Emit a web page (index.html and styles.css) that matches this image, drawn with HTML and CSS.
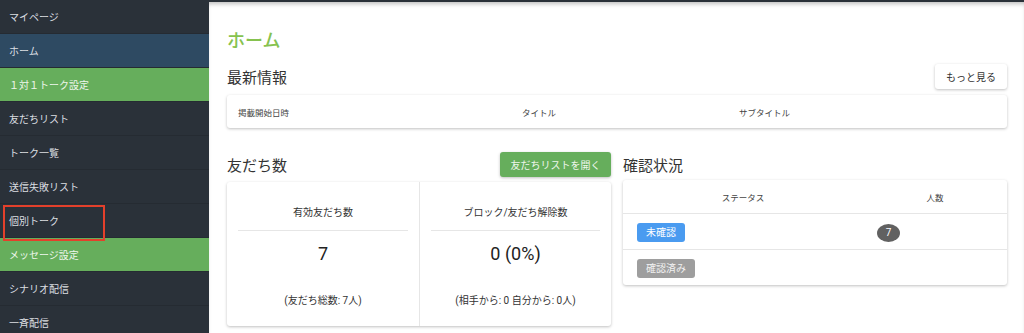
FILE: index.html
```html
<!DOCTYPE html>
<html lang="ja">
<head>
    <meta charset="UTF-8">
    <meta name="viewport" content="width=device-width, initial-scale=1.0">
    <title>ホーム</title>
    <link rel="stylesheet" href="styles.css">
</head>
<body>
    <div class="app-container">
        <aside class="sidebar">
            <ul class="side-menu">
                <li><a href="#">マイページ</a></li>
                <li class="current"><a href="#">ホーム</a></li>
                <li class="group"><a href="#">１対１トーク設定</a></li>
                <li><a href="#">友だちリスト</a></li>
                <li><a href="#">トーク一覧</a></li>
                <li><a href="#">送信失敗リスト</a></li>
                <li class="marked"><a href="#">個別トーク</a></li>
                <li class="group"><a href="#">メッセージ設定</a></li>
                <li><a href="#">シナリオ配信</a></li>
                <li><a href="#">一斉配信</a></li>
            </ul>
        </aside>

        <main>
            <h1 class="page-title">ホーム</h1>

            <section class="news">
                <div class="section-head">
                    <h2>最新情報</h2>
                    <button class="btn btn-white">もっと見る</button>
                </div>
                <div class="card news-table">
                    <span>掲載開始日時</span>
                    <span>タイトル</span>
                    <span>サブタイトル</span>
                </div>
            </section>

            <div class="bottom-grid">
                <section class="friends">
                    <div class="section-head">
                        <h2>友だち数</h2>
                        <button class="btn btn-green">友だちリストを開く</button>
                    </div>
                    <div class="card friends-card">
                        <div class="friend-col">
                            <h3>有効友だち数</h3>
                            <div class="friend-value">7</div>
                            <p>(友だち総数: 7人)</p>
                        </div>
                        <div class="friend-col">
                            <h3>ブロック/友だち解除数</h3>
                            <div class="friend-value">0 (0%)</div>
                            <p>(相手から: 0 自分から: 0人)</p>
                        </div>
                    </div>
                </section>

                <section class="status">
                    <div class="section-head">
                        <h2>確認状況</h2>
                    </div>
                    <div class="card status-card">
                        <div class="status-row status-header">
                            <span class="col-center">ステータス</span>
                            <span class="col-center">人数</span>
                        </div>
                        <div class="status-row">
                            <span><span class="tag tag-blue">未確認</span></span>
                            <span><span class="count-badge">7</span></span>
                        </div>
                        <div class="status-row">
                            <span><span class="tag tag-gray">確認済み</span></span>
                            <span></span>
                        </div>
                    </div>
                </section>
            </div>
        </main>
    </div>
</body>
</html>
```

FILE: styles.css
```css
/* Reset and base styles */
* {
    margin: 0;
    padding: 0;
    box-sizing: border-box;
}

body {
    font-family: Roboto, "Noto Sans CJK JP", sans-serif;
    background-color: #fff;
    color: #333;
    overflow: hidden;
}

/* Layout */
.app-container {
    display: flex;
    height: 333px;
}

/* Sidebar */
.sidebar {
    width: 209px;
    flex-shrink: 0;
    background-color: #2a3139;
}

.side-menu {
    list-style: none;
}

.side-menu li {
    height: 34px;
    border-bottom: 1px solid #252b32;
    position: relative;
}

.side-menu a {
    display: flex;
    align-items: center;
    height: 100%;
    padding-left: 9px;
    color: #dcdfe2;
    font-size: 10px;
    text-decoration: none;
}

.side-menu li.current {
    background-color: #2e4a62;
}

.side-menu li.group {
    background-color: #66ae5c;
}

.side-menu li.group a {
    color: #eef6ec;
}

/* red highlight frame drawn over the item */
.side-menu li.marked {
    z-index: 2;
}

.side-menu li.marked::after {
    content: "";
    position: absolute;
    left: 3px;
    top: 1px;
    width: 98px;
    height: 32px;
    border: 2px solid #e4402b;
}

/* Main area */
main {
    flex: 1;
    padding: 0 17px 0 18px;
    border-top: 2px solid #2a3139;
    box-shadow: inset 0 4px 4px -2px rgba(0, 0, 0, 0.25);
}

.page-title {
    margin-top: 27px;
    font-size: 18px;
    font-weight: 500;
    line-height: 24px;
    color: #86c24f;
}

.section-head {
    display: flex;
    align-items: center;
    justify-content: space-between;
    height: 25px;
}

.section-head h2 {
    font-size: 15px;
    font-weight: 400;
    color: #333;
}

.news .section-head {
    margin-top: 11px;
}

/* Buttons */
.btn {
    height: 25px;
    padding: 0 10px;
    border: none;
    border-radius: 3px;
    font-family: inherit;
    font-size: 10px;
    cursor: pointer;
}

.btn-white {
    background-color: #fff;
    color: #333;
    box-shadow: 0 1px 3px rgba(0, 0, 0, 0.25);
    width: 72px;
}

.btn-green {
    background-color: #66ae5c;
    color: #eef6ec;
    box-shadow: 0 1px 3px rgba(0, 0, 0, 0.25);
    width: 111px;
}

/* Cards */
.card {
    background-color: #fff;
    border-radius: 3px;
    box-shadow: 0 1px 3px rgba(0, 0, 0, 0.25);
}

.news-table {
    margin-top: 6px;
    height: 33px;
    display: grid;
    grid-template-columns: 284px 217px 1fr;
    align-items: center;
    padding-left: 11px;
    font-size: 8.5px;
    color: #444;
}

.bottom-grid {
    display: grid;
    grid-template-columns: 1fr 1fr;
    gap: 12px;
    margin-top: 24px;
}

/* Friends card */
.friends-card {
    margin-top: 5px;
    height: 144px;
    display: grid;
    grid-template-columns: 1fr 1fr;
}

.friend-col {
    padding: 24px 11px 0;
    text-align: center;
}

.friend-col + .friend-col {
    border-left: 1px solid #e6e6e6;
}

.friend-col h3 {
    font-size: 10px;
    font-weight: 400;
    line-height: 14px;
    color: #333;
    padding-bottom: 10px;
    border-bottom: 1px solid #e6e6e6;
}

.friend-value {
    margin-top: 11px;
    font-size: 18px;
    line-height: 24px;
    color: #222;
}

.friend-col p {
    margin-top: 28px;
    font-size: 10px;
    line-height: 14px;
    color: #333;
}

/* Status card */
.status-card {
    margin-top: 3px;
}

.status-row {
    display: grid;
    grid-template-columns: 226px 1fr;
    align-items: center;
    height: 36px;
    padding-left: 14px;
    border-top: 1px solid #e6e6e6;
}

.status-header {
    grid-template-columns: 240px 1fr;
    height: 33px;
    border-top: none;
    padding-left: 0;
    font-size: 8.5px;
    color: #444;
}

.col-center {
    text-align: center;
}

.tag {
    display: inline-block;
    height: 19px;
    line-height: 19px;
    padding: 0 9px;
    border-radius: 3px;
    font-size: 10px;
    color: #fff;
}

.tag-blue {
    background-color: #4a9bf0;
}

.tag-gray {
    background-color: #9e9e9e;
    color: #f2f2f2;
}

.count-badge {
    display: inline-block;
    width: 23px;
    height: 18px;
    line-height: 18px;
    margin-left: 14px;
    border-radius: 50%;
    background-color: #616161;
    color: #fff;
    font-size: 10px;
    text-align: center;
}
```
